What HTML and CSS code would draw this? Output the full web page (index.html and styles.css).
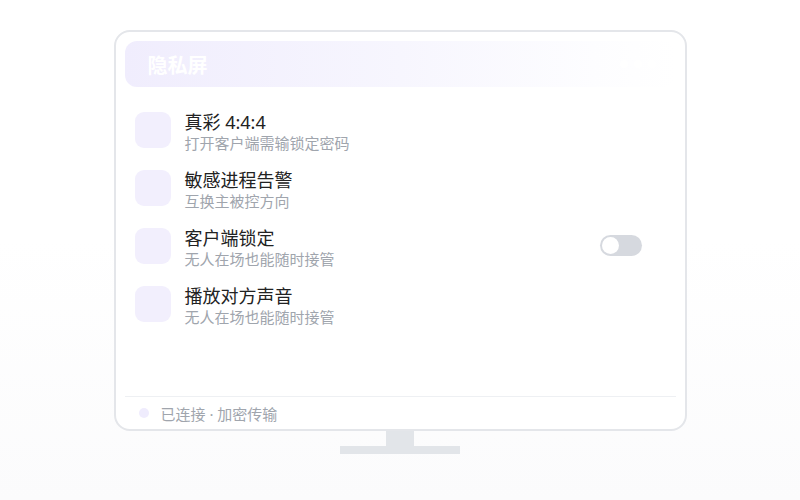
FILE: index.html
```html
<!DOCTYPE html>
<html lang="zh-CN">
<head>
    <meta charset="UTF-8">
    <meta name="viewport" content="width=device-width, initial-scale=1.0">
    <title>隐私屏</title>
    <link rel="stylesheet" href="styles.css">
</head>
<body>
    <div class="monitor">
        <div class="screen">
            <div class="screen-header">
                <span class="screen-title">隐私屏</span>
                <span class="dots"><i></i><i></i><i></i></span>
            </div>

            <ul class="options">
                <li class="option">
                    <span class="option-icon"></span>
                    <div class="option-text">
                        <div class="option-title">真彩 4:4:4</div>
                        <div class="option-desc">打开客户端需输锁定密码</div>
                    </div>
                </li>
                <li class="option">
                    <span class="option-icon"></span>
                    <div class="option-text">
                        <div class="option-title">敏感进程告警</div>
                        <div class="option-desc">互换主被控方向</div>
                    </div>
                </li>
                <li class="option">
                    <span class="option-icon"></span>
                    <div class="option-text">
                        <div class="option-title">客户端锁定</div>
                        <div class="option-desc">无人在场也能随时接管</div>
                    </div>
                    <span class="toggle"><span class="knob"></span></span>
                </li>
                <li class="option">
                    <span class="option-icon"></span>
                    <div class="option-text">
                        <div class="option-title">播放对方声音</div>
                        <div class="option-desc">无人在场也能随时接管</div>
                    </div>
                </li>
            </ul>

            <div class="screen-footer">
                <span class="status-dot"></span>
                <span>已连接 · 加密传输</span>
            </div>
        </div>
        <div class="neck"></div>
        <div class="base"></div>
    </div>
</body>
</html>
```

FILE: styles.css
```css
html, body {
    height: 100%;
}
body {
    margin: 0;
    font-family: "Noto Sans", "Noto Sans CJK SC", sans-serif;
    background: linear-gradient(to bottom, #fff 0, #fff 48%, #fbfbfc 100%);
    color: #222;
    display: flex;
    flex-direction: column;
    align-items: center;
}
.monitor {
    margin-top: 30px;
    display: flex;
    flex-direction: column;
    align-items: center;
}
.screen {
    width: 573px;
    height: 401px;
    box-sizing: border-box;
    border: 2px solid #e4e6ea;
    border-radius: 16px;
    background: #fff;
    padding: 9px 9px 0;
    display: flex;
    flex-direction: column;
}
.screen-header {
    height: 46px;
    border-radius: 12px;
    background: linear-gradient(to right, #f0edfd, #f7f6fe 50%, #fdfdff 85%, #fff);
    display: flex;
    align-items: center;
    justify-content: space-between;
    padding: 0 20px 0 23px;
}
.screen-title {
    color: #fff;
    font-size: 20px;
    font-weight: 700;
}
.dots {
    display: flex;
    gap: 6px;
}
.dots i {
    width: 8px;
    height: 8px;
    border-radius: 50%;
    background: rgba(255, 255, 255, 0.8);
}
.options {
    list-style: none;
    margin: 25px 0 0;
    padding: 0 34px 0 10px;
    flex: 1;
    display: flex;
    flex-direction: column;
    gap: 18px;
}
.option {
    display: flex;
    align-items: flex-start;
    gap: 14px;
}
.option-icon {
    width: 36px;
    height: 36px;
    border-radius: 9px;
    background: #f2effd;
    flex-shrink: 0;
}
.option-text {
    flex: 1;
}
.option-title {
    font-size: 18px;
    line-height: 20px;
    color: #222;
}
.option-desc {
    margin-top: 2px;
    font-size: 15px;
    line-height: 18px;
    color: #a0a5ad;
}
.toggle {
    margin-top: 7px;
    width: 42px;
    height: 21px;
    border-radius: 11px;
    background: #d6d9df;
    position: relative;
}
.knob {
    position: absolute;
    left: 2px;
    top: 2px;
    width: 17px;
    height: 17px;
    border-radius: 50%;
    background: #fff;
}
.screen-footer {
    height: 33px;
    border-top: 1px solid #eef0f3;
    box-sizing: border-box;
    display: flex;
    align-items: center;
    gap: 12px;
    padding-left: 14px;
    font-size: 15px;
    color: #a0a5ad;
}
.status-dot {
    width: 10px;
    height: 10px;
    border-radius: 50%;
    background: #efecfd;
}
.neck {
    width: 28px;
    height: 15px;
    background: #e2e5e9;
}
.base {
    width: 120px;
    height: 8px;
    background: #e2e5e9;
}
```
